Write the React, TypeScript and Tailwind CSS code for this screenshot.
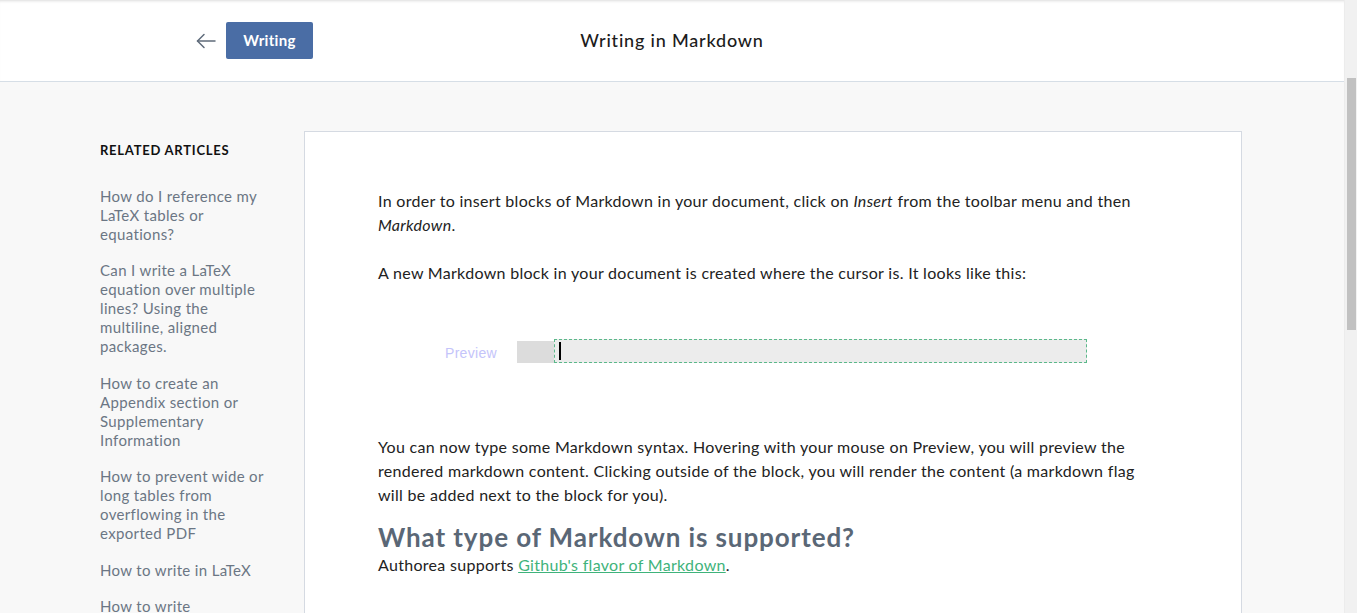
import React, {FC} from 'react';

const related: string[] = [
    "How do I reference my LaTeX tables or equations?",
    "Can I write a LaTeX equation over multiple lines? Using the multiline, aligned packages.",
    "How to create an Appendix section or Supplementary Information",
    "How to prevent wide or long tables from overflowing in the exported PDF",
    "How to write in LaTeX",
    "How to write mathematical equations",
];

const BackArrow: FC = () => (
    <svg width="20" height="16" viewBox="0 0 20 16" fill="none" stroke="#5f6b7a" strokeWidth="1.5"
         strokeLinecap="round" strokeLinejoin="round">
        <path d="M19 8H1.5"/>
        <path d="M8 1.5L1.5 8L8 14.5"/>
    </svg>
);

const Header: FC = () => (
    <header
        className="
            grid
            grid-cols-[1fr_auto_1fr]
            items-center
            shrink-0
            h-[82px]
            bg-white
            border-b
            border-[#d6dee6]
            shadow-[inset_0_3px_3px_-2px_rgba(0,0,0,0.14)]
        "
    >
        <div className="flex items-center gap-[10px] pl-[196px]">
            <BackArrow/>
            <a className="flex items-center justify-center w-[87px] h-[37px] rounded-[2px] bg-[#4a6da5] text-white text-[15px] font-bold tracking-[0.3px]">
                Writing
            </a>
        </div>
        <h1 className="text-[18px] font-medium tracking-[0.8px] text-[#1c1c1c]">Writing in Markdown</h1>
        <div/>
    </header>
);

const Sidebar: FC = () => (
    <aside className="w-[204px] shrink-0 pt-[59px]">
        <h3 className="text-[13px] font-bold tracking-[0.75px] text-[#111] uppercase">Related articles</h3>
        <ul className="flex flex-col gap-[17.5px] mt-[26px] w-[168px]">
            {related.map((title) => (
                <li key={title} className="text-[15px] leading-[19px] tracking-[0.35px] text-[#6b7684]">{title}</li>
            ))}
        </ul>
    </aside>
);

const MarkdownBlock: FC = () => (
    <div className="flex items-center h-[24px] mt-[54px] mb-[72px] ml-[67px]">
        <span className="w-[72px] text-[14px] text-[#c4c4fa] font-['Liberation_Sans',sans-serif] pt-[3px]">
            Preview
        </span>
        <div className="w-[37px] h-[22px] bg-[#dcdcdc] mt-[1px]"/>
        <div className="flex items-center w-[533px] h-[24px] bg-[#ececec] border border-dashed border-[#5bb88a] pl-[4px]">
            <div className="w-[2px] h-[18px] bg-black"/>
        </div>
    </div>
);

const Article: FC = () => (
    <main className="flex-1 h-[520px] bg-white border border-[#d5dae2] mt-[49px] pt-[57px] pl-[73px] pr-[100px]">
        <div className="text-[16px] leading-[24px] tracking-[0.3px] text-[#222]">
            <p>
                In order to insert blocks of Markdown in your document, click on <em>Insert</em> from the
                toolbar menu and then <em>Markdown</em>.
            </p>
            <p className="mt-[24px]">
                A new Markdown block in your document is created where the cursor is. It looks like this:
            </p>
            <MarkdownBlock/>
            <p>
                You can now type some Markdown syntax. Hovering with your mouse on Preview, you will preview the
                rendered markdown content. Clicking outside of the block, you will render the content (a
                markdown flag will be added next to the block for you).
            </p>
            <h2 className="text-[26px] leading-[32px] font-bold tracking-[0.9px] text-[#5a6776] mt-[14px]">
                What type of Markdown is supported?
            </h2>
            <p>
                Authorea supports <a className="text-[#3fb37b] underline">Github's flavor of Markdown</a>.
            </p>
        </div>
    </main>
);

const Scrollbar: FC = () => (
    <div className="w-[13px] shrink-0 h-full bg-[#f1f1f1] border-l border-[#ececec]">
        <div className="ml-[2px] mr-[1px] mt-[78px] h-[252px] bg-[#c1c1c1]"/>
    </div>
);

const App: FC = () => {
    return (
        <div className="flex h-[613px] overflow-hidden bg-[#f8f8f8] font-['Lato',sans-serif]">
            <div className="flex flex-col flex-1 min-w-0">
                <Header/>
                <div className="flex pl-[100px] pr-[102px]">
                    <Sidebar/>
                    <Article/>
                </div>
            </div>
            <Scrollbar/>
        </div>
    );
};

export default App;
